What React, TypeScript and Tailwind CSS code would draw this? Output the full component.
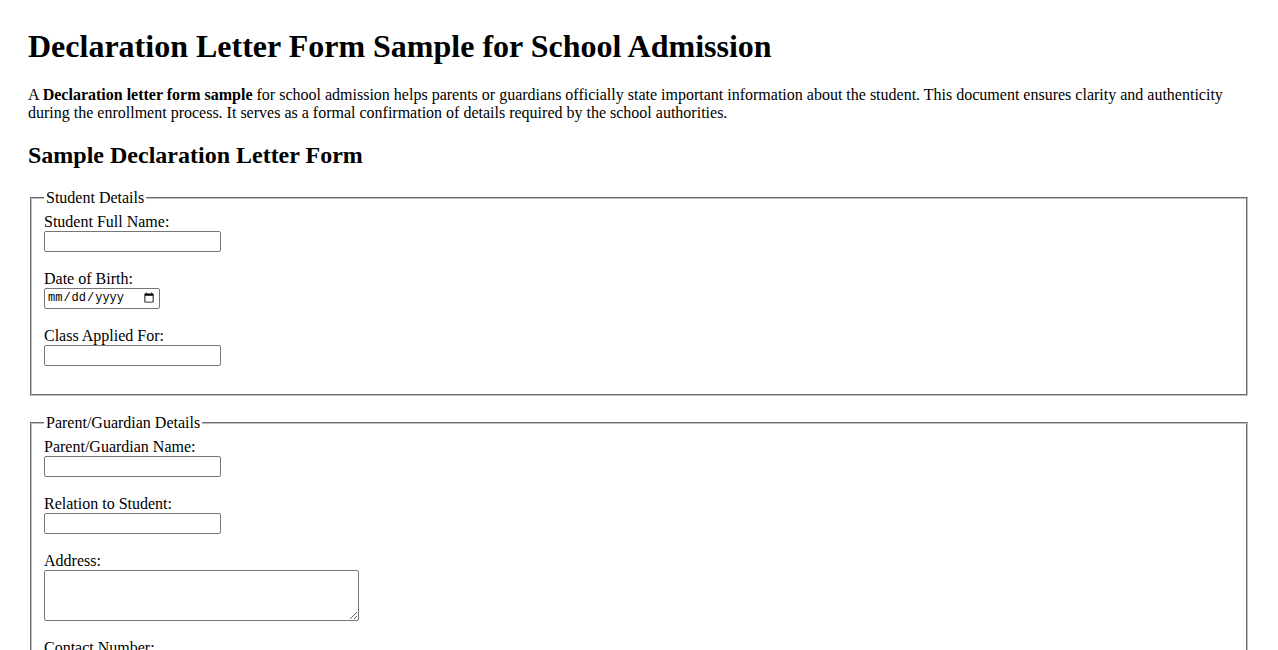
export default function App() {
  const serif = "font-['Liberation_Serif','Times_New_Roman',serif]";
  const inputCls =
    "block h-[21px] w-[177px] rounded-[2px] border border-[#767676] bg-white px-[2px] text-[13px] font-['Liberation_Sans',Arial,sans-serif]";

  return (
    <div className={`${serif} min-h-screen bg-white px-[28px] pt-[28px] pb-10 text-black`}>
      <h1 className="text-[32px] leading-[37px] font-bold">
        Declaration Letter Form Sample for School Admission
      </h1>

      <p className="mt-[21px] text-[16px] leading-[18px]">
        A <b>Declaration letter form sample</b> for school admission helps parents or guardians
        officially state important information about the student. This document ensures clarity and
        authenticity during the enrollment process. It serves as a formal confirmation of details
        required by the school authorities.
      </p>

      <h2 className="mt-[19px] text-[24px] leading-[28px] font-bold">Sample Declaration Letter Form</h2>

      <form className="text-[16px] leading-[18px]">
        {/* Student details */}
        <fieldset className="mx-[2px] mt-[20px] border-2 border-[#c0c0c0] [border-style:groove] px-[12px] pt-[5.6px] pb-[10px]">
          <legend className="px-[2px] leading-[18px]">Student Details</legend>
          <div className="pb-[18px]">
            <label className="block">Student Full Name:</label>
            <input type="text" className={inputCls} />
          </div>
          <div className="pb-[18px]">
            <label className="block">Date of Birth:</label>
            <input
              type="date"
              className="block h-[21px] w-[116px] rounded-[2px] border border-[#767676] bg-white px-[2px] text-[12px] font-['Liberation_Mono','Courier_New',monospace]"
            />
          </div>
          <div className="pb-[18px]">
            <label className="block">Class Applied For:</label>
            <input type="text" className={inputCls} />
          </div>
        </fieldset>

        {/* Parent / guardian details */}
        <fieldset className="mx-[2px] mt-[18px] border-2 border-[#c0c0c0] [border-style:groove] px-[12px] pt-[6px] pb-[10px]">
          <legend className="px-[2px] leading-[18px]">Parent/Guardian Details</legend>
          <div className="pb-[18px]">
            <label className="block">Parent/Guardian Name:</label>
            <input type="text" className={inputCls} />
          </div>
          <div className="pb-[18px]">
            <label className="block">Relation to Student:</label>
            <input type="text" className={inputCls} />
          </div>
          <div className="pb-[18px]">
            <label className="block">Address:</label>
            <textarea className="block h-[51px] w-[315px] rounded-[2px] border border-[#767676] bg-white text-[13px] font-['Liberation_Mono',monospace]" />
          </div>
          <div className="pb-[18px]">
            <label className="block">Contact Number:</label>
            <input type="tel" className={inputCls} />
          </div>
        </fieldset>

        {/* Declaration */}
        <fieldset className="mx-[2px] mt-[18px] border-2 border-[#c0c0c0] [border-style:groove] px-[12px] pt-[6px] pb-[10px]">
          <legend className="px-[2px] leading-[18px]">Declaration</legend>
          <div className="pb-[18px]">
            <label className="block">Signature of Parent/Guardian:</label>
            <input type="text" className={inputCls} />
          </div>
          <div className="pb-[18px]">
            <label className="block">Date:</label>
            <input
              type="date"
              className="block h-[21px] w-[116px] rounded-[2px] border border-[#767676] bg-white px-[2px] text-[12px] font-['Liberation_Mono','Courier_New',monospace]"
            />
          </div>
        </fieldset>
      </form>
    </div>
  );
}
